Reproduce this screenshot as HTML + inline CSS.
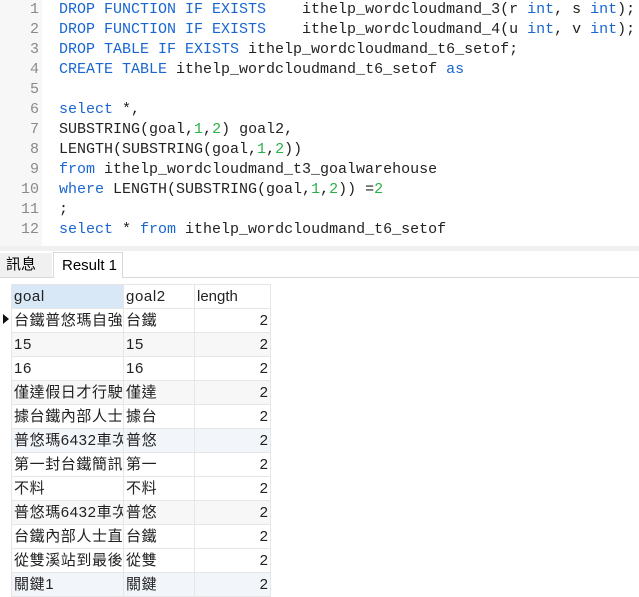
<!DOCTYPE html>
<html><head><meta charset="utf-8"><style>
body{margin:0;width:639px;height:587px;overflow:hidden;background:#fff;position:relative;font-family:"Liberation Sans","Noto Sans CJK TC",sans-serif}
.gut{position:absolute;left:0;top:0;width:42px;height:246px;background:#f7f7f7}
.ln{position:absolute;left:0;width:39px;text-align:right;font:15px "Liberation Mono",monospace;color:#8a8a8a}
.cd{position:absolute;left:59px;font:15px "Liberation Mono",monospace;color:#222;white-space:pre}
.k{color:#1a66d0}.n{color:#2bb04a}
.sep{position:absolute;left:0;top:246px;width:639px;height:5px;background:#f0f0f0}
.tab{position:absolute;top:252px;height:26px;font-size:15px;line-height:26px}
.tb{position:absolute;left:0;top:277px;width:639px;height:1px;background:#d8d8d8}
table{position:absolute;left:11px;top:284px;border-collapse:collapse;font-size:15px;color:#222;table-layout:fixed}
td{height:23px;padding:0 2px;border:1px solid #e6e6e6;white-space:nowrap;overflow:hidden;line-height:23px}
th{height:23px;padding:0 2px;border:1px solid #e6e6e6;text-align:left;font-weight:normal;background:#fff}
tr.g td{background:#f7f7f7}tr.b td{background:#f2f6fb}
.c1{width:107px;max-width:107px;letter-spacing:0.6px}.c2{width:66px;max-width:66px;letter-spacing:0.6px}.c3{width:70px;text-align:right}
</style></head><body>
<div class="gut"></div>
<div class="ln" style="top:1px">1</div><div class="cd" style="top:1px"><span class="k">DROP FUNCTION IF EXISTS</span>    ithelp_wordcloudmand_3(r <span class="k">int</span>, s <span class="k">int</span>);</div>
<div class="ln" style="top:21px">2</div><div class="cd" style="top:21px"><span class="k">DROP FUNCTION IF EXISTS</span>    ithelp_wordcloudmand_4(u <span class="k">int</span>, v <span class="k">int</span>);</div>
<div class="ln" style="top:41px">3</div><div class="cd" style="top:41px"><span class="k">DROP TABLE IF EXISTS</span> ithelp_wordcloudmand_t6_setof;</div>
<div class="ln" style="top:61px">4</div><div class="cd" style="top:61px"><span class="k">CREATE TABLE</span> ithelp_wordcloudmand_t6_setof <span class="k">as</span></div>
<div class="ln" style="top:81px">5</div>
<div class="ln" style="top:101px">6</div><div class="cd" style="top:101px"><span class="k">select</span> *,</div>
<div class="ln" style="top:121px">7</div><div class="cd" style="top:121px">SUBSTRING(goal,<span class="n">1</span>,<span class="n">2</span>) goal2,</div>
<div class="ln" style="top:141px">8</div><div class="cd" style="top:141px">LENGTH(SUBSTRING(goal,<span class="n">1</span>,<span class="n">2</span>))</div>
<div class="ln" style="top:161px">9</div><div class="cd" style="top:161px"><span class="k">from</span> ithelp_wordcloudmand_t3_goalwarehouse</div>
<div class="ln" style="top:181px">10</div><div class="cd" style="top:181px"><span class="k">where</span> LENGTH(SUBSTRING(goal,<span class="n">1</span>,<span class="n">2</span>)) =<span class="n">2</span></div>
<div class="ln" style="top:201px">11</div><div class="cd" style="top:201px">;</div>
<div class="ln" style="top:221px">12</div><div class="cd" style="top:221px"><span class="k">select</span> * <span class="k">from</span> ithelp_wordcloudmand_t6_setof</div>
<div class="sep"></div>
<div class="tab" style="left:0;width:52px;background:#f0f0f0;padding-left:6px;box-sizing:border-box;top:253px;height:24px;line-height:24px">訊息</div>
<div class="tab" style="left:53px;width:70px;border:1px solid #d8d8d8;border-bottom:none;background:#fff;padding-left:8px;box-sizing:border-box;z-index:2">Result 1</div>
<div class="tb"></div>
<div style="position:absolute;left:3px;top:314px;width:0;height:0;border-top:5px solid transparent;border-bottom:5px solid transparent;border-left:6px solid #111"></div>
<table>
<colgroup><col style="width:111px"><col style="width:70px"><col style="width:76px"></colgroup>
<tr><th class="c1" style="background:#d9e8f7">goal</th><th class="c2">goal2</th><th class="c3" style="text-align:left">length</th></tr>
<tr><td class="c1">台鐵普悠瑪自強號</td><td class="c2">台鐵</td><td class="c3">2</td></tr>
<tr class="g"><td class="c1">15</td><td class="c2">15</td><td class="c3">2</td></tr>
<tr><td class="c1">16</td><td class="c2">16</td><td class="c3">2</td></tr>
<tr class="g"><td class="c1">僅達假日才行駛</td><td class="c2">僅達</td><td class="c3">2</td></tr>
<tr><td class="c1">據台鐵內部人士</td><td class="c2">據台</td><td class="c3">2</td></tr>
<tr class="b"><td class="c1">普悠瑪6432車次</td><td class="c2">普悠</td><td class="c3">2</td></tr>
<tr><td class="c1">第一封台鐵簡訊</td><td class="c2">第一</td><td class="c3">2</td></tr>
<tr><td class="c1">不料</td><td class="c2">不料</td><td class="c3">2</td></tr>
<tr class="g"><td class="c1">普悠瑪6432車次</td><td class="c2">普悠</td><td class="c3">2</td></tr>
<tr><td class="c1">台鐵內部人士直</td><td class="c2">台鐵</td><td class="c3">2</td></tr>
<tr><td class="c1">從雙溪站到最後</td><td class="c2">從雙</td><td class="c3">2</td></tr>
<tr class="b"><td class="c1">關鍵1</td><td class="c2">關鍵</td><td class="c3">2</td></tr>
</table>
</body></html>
